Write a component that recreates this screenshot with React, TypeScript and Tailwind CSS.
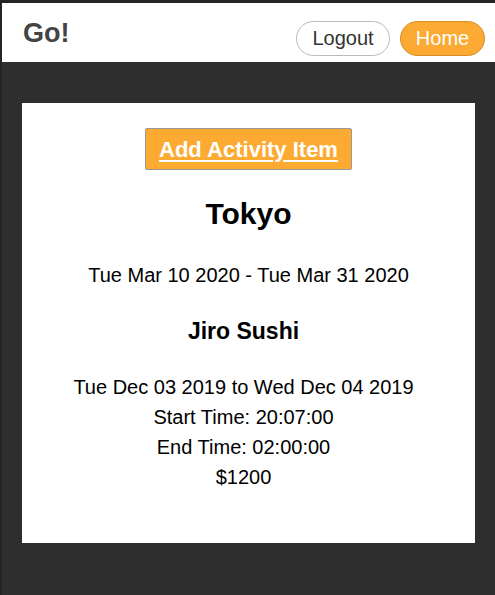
export default function App() {
  return (
    <div
      className="min-h-[595px] bg-[#2e2e2e] border-l-2 border-t-[3px] border-[#242424]"
      style={{ fontFamily: '"Liberation Sans", Arial, sans-serif' }}
    >
      <header className="h-[59px] bg-white flex items-center justify-between pl-[21px] pr-[10px]">
        <h1 className="text-[27px] font-bold text-[#444] leading-none mt-[2px]">Go!</h1>
        <div className="flex items-center gap-[10px] mt-[11px]">
          <button className="h-[35px] w-[94px] rounded-full border border-[#bbb] bg-white text-[20px] text-[#333]">
            Logout
          </button>
          <button className="h-[35px] w-[85px] rounded-full border border-[#d68d25] bg-[#fcaa33] text-[20px] text-white">
            Home
          </button>
        </div>
      </header>

      <div className="px-[20px] pt-[41px]">
        <div className="bg-white h-[440px] flex flex-col items-center pt-[25px] text-black">
          <button className="h-[42px] px-[13px] bg-[#fdaa33] border border-[#999] rounded-[2px] text-white text-[22px] font-bold underline underline-offset-[3px]">
            Add Activity Item
          </button>
          <h2 className="mt-[26px] text-[30px] font-bold leading-[36px]">Tokyo</h2>
          <p className="mt-[31px] text-[20px] leading-[24px]">Tue Mar 10 2020 - Tue Mar 31 2020</p>
          <div className="flex flex-col items-center pr-[10px]">
            <h3 className="mt-[30px] text-[23px] font-bold leading-[28px]">Jiro Sushi</h3>
            <div className="mt-[27px] text-[20px] leading-[30px] text-center">
              <p>Tue Dec 03 2019 to Wed Dec 04 2019</p>
              <p>Start Time: 20:07:00</p>
              <p>End Time: 02:00:00</p>
              <p>$1200</p>
            </div>
          </div>
        </div>
      </div>
    </div>
  )
}
